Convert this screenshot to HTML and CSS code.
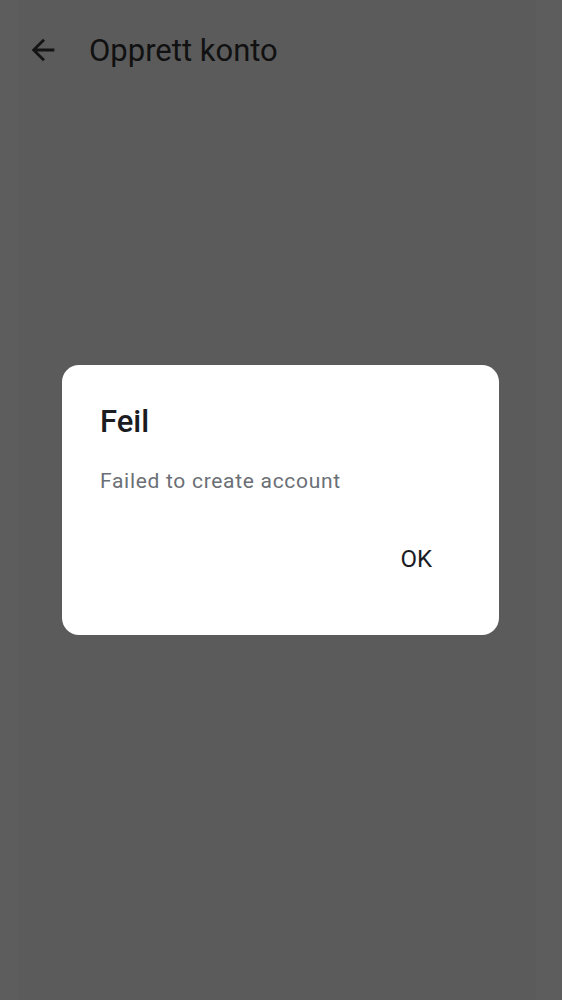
FILE: index.html
```html
<!DOCTYPE html>
<html lang="no">
<head>
<meta charset="utf-8">
<title>Opprett konto</title>
<link rel="stylesheet" href="styles.css">
</head>
<body>
<div class="page">
  <header class="appbar">
    <button class="back" aria-label="Tilbake">
      <svg width="34" height="34" viewBox="0 0 24 24"><path d="M20 11H7.83l5.59-5.59L12 4l-8 8 8 8 1.41-1.41L7.83 13H20v-2z" fill="#141414"/></svg>
    </button>
    <h1 class="title">Opprett konto</h1>
  </header>
  <main class="content"></main>
</div>
<div class="scrim">
  <div class="dialog" role="alertdialog">
    <h2 class="dialog-title">Feil</h2>
    <p class="dialog-msg">Failed to create account</p>
    <div class="dialog-actions">
      <button class="dialog-btn">OK</button>
    </div>
  </div>
</div>
</body>
</html>
```
FILE: styles.css
```css
html, body {
  margin: 0;
  padding: 0;
}
body {
  font-family: Roboto, "Noto Sans", sans-serif;
  background: linear-gradient(to right, #5d5d5d 0, #5d5d5d 18px, #5b5b5b 18px, #5b5b5b 536px, #5d5d5d 536px);
  height: 1000px;
  overflow: hidden;
}
.page {
  height: 1000px;
  display: flex;
  flex-direction: column;
}
.appbar {
  height: 100px;
  flex: none;
  display: flex;
  align-items: center;
  padding: 0 0 0 26px;
  gap: 29px;
  box-sizing: border-box;
}
.back {
  border: 0;
  background: none;
  padding: 0;
  width: 34px;
  height: 34px;
  display: flex;
}
.title {
  margin: 0;
  font-size: 31px;
  font-weight: 400;
  color: #111111;
}
.content {
  flex: 1;
}
.scrim {
  position: fixed;
  inset: 0;
  display: flex;
  align-items: center;
  justify-content: center;
  padding-right: 1px;
}
.dialog {
  width: 437px;
  height: 270px;
  box-sizing: border-box;
  background: #ffffff;
  border-radius: 17px;
  padding: 37px 38px 0 38px;
  display: flex;
  flex-direction: column;
}
.dialog-title {
  margin: 0;
  font-size: 31px;
  font-weight: 500;
  color: #1b1c1f;
  line-height: 40px;
}
.dialog-msg {
  margin: 25px 0 0 0;
  font-size: 21px;
  letter-spacing: 0.7px;
  line-height: 28px;
  color: #6b6f76;
}
.dialog-actions {
  display: flex;
  justify-content: flex-end;
  margin-top: 42px;
  margin-right: 9px;
}
.dialog-btn {
  border: 0;
  background: none;
  font-family: Roboto, "Noto Sans", sans-serif;
  font-size: 24px;
  font-weight: 400;
  color: #1b1c1f;
  padding: 8px 20px;
}
```
